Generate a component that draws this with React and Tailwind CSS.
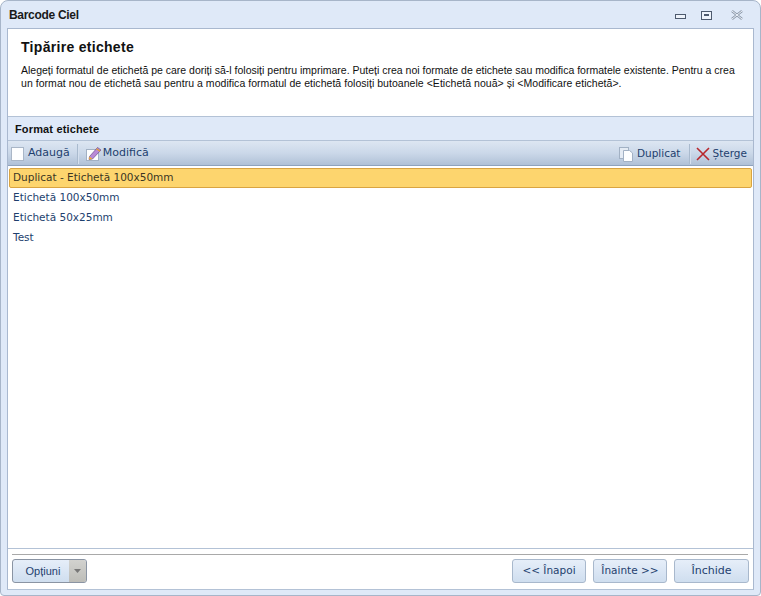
import React from "react";

const ui = { fontFamily: '"DejaVu Sans", sans-serif' };

function Sep() {
  return <div className="w-px h-[20px] bg-[#a9bace] border-r border-[#d5e0ee] box-content" />;
}

function FooterBtn({ children, w, size }) {
  return (
    <button className={`h-[24px] ${w} ${size} rounded-[3px] border border-[#a8b8cc] bg-gradient-to-b from-[#e6eef9] to-[#cfdeef] text-[#1e3f6e] flex items-center justify-center`} style={ui}>
      {children}
    </button>
  );
}

export default function App() {
  return (
    <div className="w-[761px] h-[596px] bg-[#dfe9f8] border border-[#a7b5c9] rounded-t-[8px] rounded-b-[4px] flex flex-col overflow-hidden">
      <div className="h-[27px] shrink-0 flex items-center justify-between pl-[8px] pr-[17px]">
        <span className="text-[12px] font-bold text-[#1a1a1a] tracking-[-0.3px]" style={{ fontFamily: '"Liberation Sans", sans-serif' }}>Barcode Ciel</span>
        <div className="flex items-end gap-[15px] mt-[1px]">
          <svg width="11" height="6" viewBox="0 0 11 6" fill="none"><rect x="0.5" y="0.5" width="10" height="4" stroke="#4d5a6e" fill="#eef3fb" /></svg>
          <svg width="11" height="9" viewBox="0 0 11 9" fill="none" className="mr-[4px]"><rect x="0.5" y="0.5" width="10" height="8" stroke="#4d5a6e" fill="#eef3fb" /><rect x="3" y="3" width="5" height="2" fill="#4d5a6e" /></svg>
          <svg width="12" height="10" viewBox="0 0 12 10" fill="none"><path d="M1 1 L11 9 M11 1 L1 9" stroke="#8a97a8" strokeWidth="2.4" /><path d="M1 1 L11 9 M11 1 L1 9" stroke="#eef3fb" strokeWidth="1" /></svg>
        </div>
      </div>

      <div className="mx-[6px] flex-1 flex flex-col bg-white border-t border-x border-[#a9b8cf] border-b border-b-[#b3c2d6] min-h-0">
        <div className="h-[87px] shrink-0 pl-[13px] pt-[9px]" style={{ fontFamily: '"Liberation Sans", sans-serif' }}>
          <div className="text-[14px] font-bold text-[#111] leading-[18px] tracking-[0.3px]">Tipărire etichete</div>
          <div className="mt-[8px] text-[10.5px] leading-[13px] text-[#111] whitespace-nowrap">
            <p>Alegeți formatul de etichetă pe care doriți să-l folosiți pentru imprimare. Puteți crea noi formate de etichete sau modifica formatele existente. Pentru a crea</p>
            <p className="tracking-[0.04px]">un format nou de etichetă sau pentru a modifica formatul de etichetă folosiți butoanele &lt;Etichetă nouă&gt; și &lt;Modificare etichetă&gt;.</p>
          </div>
        </div>

        <div className="h-[25px] shrink-0 bg-[#dfe9f8] border-y border-[#b3c2d6] flex items-center pl-[7px] pt-[1px]">
          <span className="text-[11px] font-bold text-[#111] tracking-[0.15px]" style={{ fontFamily: '"Liberation Sans", sans-serif' }}>Format etichete</span>
        </div>

        <div className="h-[25px] shrink-0 bg-gradient-to-b from-[#dde6f2] via-[#cbd8e9] to-[#b0c1d7] border-b border-[#8fa3bd] flex items-center pl-[3px] pr-[6px] pt-[1px] text-[11px] text-[#1e3f6e]" style={ui}>
          <div className="flex items-center gap-[4px]">
            <svg width="13" height="16" viewBox="0 0 13 16"><rect x="0.5" y="1.5" width="12" height="13" fill="#fdfeff" stroke="#a9b6c7" /></svg>
            <span>Adaugă</span>
          </div>
          <div className="mx-[7px]"><Sep /></div>
          <div className="flex items-center gap-[1px]">
            <svg width="16" height="16" viewBox="0 0 16 16">
              <rect x="0.5" y="3.5" width="12" height="11" fill="#fdfeff" stroke="#a2b1c4" />
              <path d="M3.5 10.5 L11.5 1.5 L15 4 L6.5 13 L3 13.5 Z" fill="#b98ad6" stroke="#6a4a8a" strokeWidth="0.7" />
              <path d="M3 13.5 L3.5 10.5 L6.5 13 Z" fill="#f0b030" />
              <path d="M10.5 2.7 L14 5.2" stroke="#e6a028" strokeWidth="1.2" />
            </svg>
            <span>Modifică</span>
          </div>
          <div className="flex-1" />
          <div className="flex items-center gap-[3px] text-[10.5px]">
            <svg width="16" height="16" viewBox="0 0 16 16">
              <rect x="1.5" y="1.5" width="9" height="11" fill="#e4ebf4" stroke="#a2b1c4" />
              <path d="M5.5 4.5 H11.5 L14.5 7 V15.5 H5.5 Z" fill="#fdfeff" stroke="#a2b1c4" />
            </svg>
            <span>Duplicat</span>
          </div>
          <div className="ml-[8px] mr-[5px]"><Sep /></div>
          <div className="flex items-center gap-[3px] text-[10.5px]">
            <svg width="14" height="14" viewBox="0 0 14 14"><path d="M1 1 L13 13 M13 1 L1 13" stroke="#b8272c" strokeWidth="1.6" /></svg>
            <span>Șterge</span>
          </div>
        </div>

        <div className="flex-1 min-h-0 pt-[2px] px-[1px] text-[10.5px] text-[#1e3f6e]" style={ui}>
          <div className="h-[20px] rounded-[2px] border border-[#d9a441] bg-[#fdd56e] text-[#3b3524] flex items-center pl-[3px]">Duplicat - Etichetă 100x50mm</div>
          <div className="h-[20px] flex items-center pl-[4px]">Etichetă 100x50mm</div>
          <div className="h-[20px] flex items-center pl-[4px]">Etichetă 50x25mm</div>
          <div className="h-[20px] flex items-center pl-[4px]">Test</div>
        </div>

        <div className="h-[41px] shrink-0 border-t border-[#b3c2d6] bg-white pt-[5px] px-[4px]">
          <div className="h-px bg-[#a9a9a9] mr-[1px]" />
          <div className="flex items-center justify-between pt-[4px]">
            <div className="h-[24px] w-[75px] rounded-[3px] border border-[#8a94a3] bg-gradient-to-b from-[#e6eef9] to-[#cfdeef] flex overflow-hidden text-[11px] text-[#1e3f6e]" style={{ fontFamily: '"Liberation Sans", sans-serif' }}>
              <span className="flex-1 flex items-center justify-center pl-[4px]">Opțiuni</span>
              <span className="w-[17px] bg-gradient-to-b from-[#d2d2cf] to-[#bdbdb8] flex items-center justify-center">
                <svg width="7" height="4" viewBox="0 0 7 4"><path d="M0 0 H7 L3.5 4 Z" fill="#777" /></svg>
              </span>
            </div>
            <div className="flex gap-[7px]">
              <FooterBtn w="w-[74px]" size="text-[10.5px]">&lt;&lt; Înapoi</FooterBtn>
              <FooterBtn w="w-[74px]" size="text-[10.5px]">Înainte &gt;&gt;</FooterBtn>
              <FooterBtn w="w-[75px]" size="text-[11px]">Închide</FooterBtn>
            </div>
          </div>
        </div>
      </div>
      <div className="h-[5px] shrink-0" />
    </div>
  );
}
